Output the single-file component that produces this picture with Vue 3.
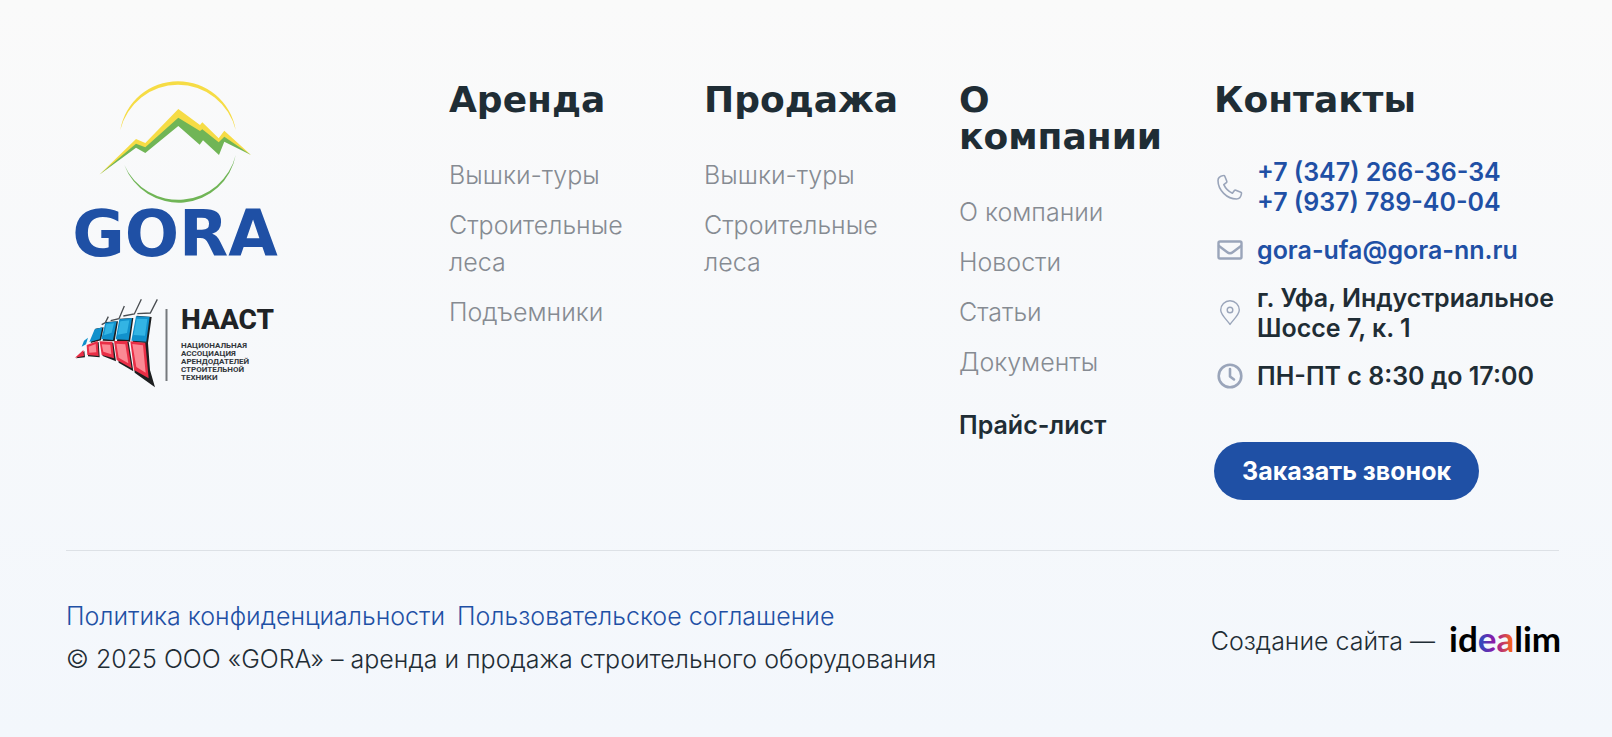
<template>
  <footer class="footer">
    <div class="footer__main">
      <div class="footer__logos">
        <a class="footer__logo" href="#" aria-label="GORA">
          <svg width="218" height="192" viewBox="0 0 218 192">
            <path d="M54.300 49A58.500 58.500 0 0 1 169.700 49A59.400 59.400 0 0 0 54.300 49Z" fill="#f6dc45" />
            <path d="M58.300 84A58 58 0 0 0 169.700 74A59.200 59.200 0 0 1 58.300 84Z" fill="#70b556" />
            <path d="M33.300 93.700 70 58l9.300 4 33-34 21.700 16 2.300-2.700 16.400 16 5.600-7.600L185 74l-26.700-16-5.600 6-16.400-14-2.300 3-21.700-14-33 30-9.300-4Z" fill="#f6dc45" />
            <path d="M33.300 93.700 70 62.700l9.300 3.600 33-29.600L134 50l2.300-1.700 16.400 13 5.600-5.600L185 74l-26.700-13.300L153 74l-16-14.700-3.300 4.400L112.300 45l-33 27-9.300-5.300Z" fill="#70b556" />
            <text class="footer__logo-name" x="109" y="175" text-anchor="middle">GORA</text>
          </svg>
        </a>
        <a class="footer__partner" href="#" aria-label="НААСТ">
          <svg width="218" height="92" viewBox="0 0 218 92">
            <g transform="translate(4 -9) scale(0.3333)">
              <path d="m202 71 39-2 21-41M160 78l33-6 21-44M122 92l25-6 16-38M95 104l11-6 9-18" fill="none" stroke="#4a4e52" stroke-width="4" />
              <g fill="#1c1e20">
                <path d="m200 77 45 4-11 78-46-2ZM150 86l40-2-10 71-39-2ZM108 96l36-2-10 60-36-2ZM76 116l25-4-8 39-31 8Z" />
                <path d="m185 158 49 1 6 81 15 52-61-44ZM137 157l39-1 14 88-44-26ZM94 158l36 0 8 56-40-16ZM54 169l32-13 3 46-35-3ZM18 205l25-22 2 19Z" />
              </g>
              <g fill="#1191cc">
                <path d="m198 79 41 1-10 75-45-3ZM148 88l38-4-10 66-39-2ZM106 98l34-4-11 56-35-3ZM74 118l23-6-8 36-31 8ZM42 152l12-9-6 20-13 7Z" />
              </g>
              <g fill="#33b4e4">
                <path d="m200 86 32 1-7 50-34-2ZM151 94l27-3-7 38-28 5ZM109 103l23-3-7 28-23 8Z" />
              </g>
              <g fill="#e92e46">
                <path d="m181 154 45 5 10 106-44-25ZM132 153l40 0 13 82-45-25ZM89 154l38 1 5 50-37-10ZM50 165l33-12 3 45-34-3ZM15 203l25-23 2 18Z" />
              </g>
              <g fill="#fb8994">
                <path d="m187 162 32 4 8 82-28-17ZM139 161l27 2 9 57-29-17ZM95 163l26 1 3 29-24-8ZM56 170l21-8 2 25-21 1Z" />
              </g>
            </g>
            <path d="M100.500 10v72" stroke="#75797d" stroke-width="2" />
            <text class="footer__partner-name" x="115" y="30">НААСТ</text>
            <g class="footer__partner-note">
              <text v-for="(line, index) in partnerLines" :key="line" x="115" :y="49 + index * 8">{{ line }}</text>
            </g>
          </svg>
        </a>
      </div>

      <nav v-for="column in columns" :key="column.title" class="footer__column" :aria-label="column.title">
        <h2 class="footer__title">{{ column.title }}</h2>
        <ul class="footer__links">
          <li v-for="link in column.links" :key="link">
            <a href="#">{{ link }}</a>
          </li>
        </ul>
        <a v-if="column.price" class="footer__price" href="#">{{ column.price }}</a>
      </nav>

      <section class="footer__contacts">
        <h2 class="footer__title">Контакты</h2>
        <ul class="contacts">
          <li class="contacts__item">
            <svg class="contacts__icon" viewBox="0 0 26 26">
              <path d="M6.500 1.500C3 2 1 4 1 6.500 1 16 10 25 19.500 25c2.500 0 4.500-2 5-5.500.1-.6-.2-1.100-.7-1.300l-5-2c-.5-.2-1.100 0-1.400.4l-2 2.600C11.500 17.500 8.500 14.500 6.800 10.700l2.600-2.100c.4-.3.6-.9.4-1.400l-2-5C7.600 1.700 7.100 1.400 6.500 1.500Z" stroke-width="1.600" />
            </svg>
            <div class="contacts__phones">
              <a href="tel:+73472663634">+7 (347) 266-36-34</a>
              <a href="tel:+79377894004">+7 (937) 789-40-04</a>
            </div>
          </li>
          <li class="contacts__item">
            <svg class="contacts__icon" viewBox="0 0 26 26">
              <rect x="1.500" y="4.500" width="23" height="17" rx="1.500" stroke-width="2.400" />
              <path d="m2 9 8 6c2 1.600 4 1.600 6 0l8-6" stroke-width="2.400" />
            </svg>
            <a href="mailto:gora-ufa@gora-nn.ru">gora-ufa@gora-nn.ru</a>
          </li>
          <li class="contacts__item">
            <svg class="contacts__icon" viewBox="0 0 26 26">
              <path d="M13 24.500C11 21 3.700 15 3.700 10a9.300 9.300 0 0 1 18.600 0c0 5-7.300 11-9.300 14.500Z" stroke-width="1.400" />
              <circle cx="13" cy="10" r="2.800" stroke-width="1.400" />
            </svg>
            <span>г. Уфа, Индустриальное Шоссе 7, к. 1</span>
          </li>
          <li class="contacts__item">
            <svg class="contacts__icon" viewBox="0 0 26 26">
              <circle cx="13" cy="13" r="11.300" stroke-width="2.600" />
              <path d="M13 6v7.500l4 3" stroke-width="2.600" />
            </svg>
            <span>ПН-ПТ с 8:30 до 17:00</span>
          </li>
        </ul>
        <button class="footer__call" type="button">Заказать звонок</button>
      </section>
    </div>

    <div class="footer__bottom">
      <div class="footer__legal">
        <div class="footer__policies">
          <a href="#">Политика конфиденциальности</a>
          <a href="#">Пользовательское соглашение</a>
        </div>
        <div>© 2025 ООО «GORA» – аренда и продажа строительного оборудования</div>
      </div>
      <div class="footer__author">
        <span>Создание сайта —</span>
        <a href="#" aria-label="idealim">
          <svg width="110" height="44" viewBox="0 0 110 44">
            <defs>
              <linearGradient id="idealim-gradient" gradientUnits="userSpaceOnUse" x1="28" y1="0" x2="64" y2="0">
                <stop offset="0" stop-color="#1757c2" />
                <stop offset="0.5" stop-color="#9416a6" />
                <stop offset="1" stop-color="#ff6a13" />
              </linearGradient>
            </defs>
            <text class="footer__author-name" x="0" y="33">id<tspan fill="url(#idealim-gradient)">ea</tspan>lim</text>
          </svg>
        </a>
      </div>
    </div>
  </footer>
</template>

<script setup>
  const columns = [
    { title: 'Аренда', links: ['Вышки-туры', 'Строительные леса', 'Подъемники'] },
    { title: 'Продажа', links: ['Вышки-туры', 'Строительные леса'] },
    {
      title: 'О компании',
      links: ['О компании', 'Новости', 'Статьи', 'Документы'],
      price: 'Прайс-лист'
    }
  ]

  const partnerLines = ['НАЦИОНАЛЬНАЯ', 'АССОЦИАЦИЯ', 'АРЕНДОДАТЕЛЕЙ', 'СТРОИТЕЛЬНОЙ', 'ТЕХНИКИ']
</script>

<style>
  body {
    margin: 0;
    background: #f3f7fc;
  }
</style>

<style scoped>
  .footer {
    box-sizing: border-box;
    min-height: 100vh;
    padding: 81px 53px 58px 66px;
    background: linear-gradient(#fafafa, #f3f7fc);
    color: #1f2d35;
    font-family: Inter, "Noto Sans", sans-serif;
    font-size: 25px;
    font-weight: 300;
    line-height: 37px;
  }

  .footer a {
    color: #1f50a5;
    text-decoration: none;
  }

  .footer svg {
    display: block;
    flex-shrink: 0;
    overflow: visible;
  }

  .footer__main {
    display: grid;
    grid-template-columns: 383fr 255fr 255fr 255fr 345fr;
    padding-bottom: 50px;
    border-bottom: 1px solid #dde1e6;
  }

  .footer__main > * {
    min-width: 0;
  }

  .footer__logos {
    display: flex;
    flex-direction: column;
    align-items: flex-start;
    gap: 26px;
  }

  .footer__logo-name {
    fill: #1f50a5;
    font-family: "DejaVu Sans", sans-serif;
    font-size: 64px;
    font-weight: 700;
  }

  .footer__partner-name {
    fill: #202326;
    font-family: Roboto, sans-serif;
    font-size: 28px;
    font-weight: 800;
  }

  .footer__partner-note {
    fill: #33373b;
    font-family: Roboto, sans-serif;
    font-size: 8px;
    font-weight: 700;
  }

  .footer__column {
    padding-right: 40px;
  }

  .footer__title {
    margin: 0 0 39px;
    font-family: "DejaVu Sans", sans-serif;
    font-size: 36px;
    font-weight: 700;
    line-height: 37px;
  }

  .footer__links,
  .contacts {
    display: flex;
    flex-direction: column;
    gap: 13px;
    margin: 0;
    padding: 0;
    list-style: none;
  }

  .footer__links a {
    color: #868b92;
  }

  .footer a.footer__price {
    display: inline-block;
    margin-top: 26px;
    color: #1f2d35;
    font-weight: 600;
  }

  .contacts {
    gap: 18px;
    font-weight: 600;
    line-height: 30px;
  }

  .contacts__item {
    display: flex;
    align-items: center;
    gap: 14px;
  }

  .contacts__icon {
    width: 26px;
    height: 26px;
    margin-left: 3px;
    fill: none;
    stroke: #9aa5ba;
    stroke-linecap: round;
    stroke-linejoin: round;
  }

  .contacts__phones {
    display: flex;
    flex-direction: column;
  }

  .footer__call {
    margin-top: 51px;
    padding: 0 28px;
    height: 58px;
    border: 0;
    border-radius: 29px;
    background: #1f50a5;
    color: #fff;
    font: inherit;
    font-weight: 700;
    white-space: nowrap;
    cursor: pointer;
  }

  .footer__bottom {
    display: flex;
    align-items: center;
    justify-content: space-between;
    gap: 32px;
    padding-top: 47px;
  }

  .footer__legal {
    display: flex;
    flex-direction: column;
    gap: 6px;
  }

  .footer__policies {
    display: flex;
    flex-wrap: wrap;
    gap: 0 12px;
  }

  .footer__author {
    display: flex;
    align-items: center;
    gap: 14px;
    padding-top: 6px;
  }

  .footer__author-name {
    fill: #000;
    font-family: Lato, sans-serif;
    font-size: 35px;
    font-weight: 700;
  }
</style>
